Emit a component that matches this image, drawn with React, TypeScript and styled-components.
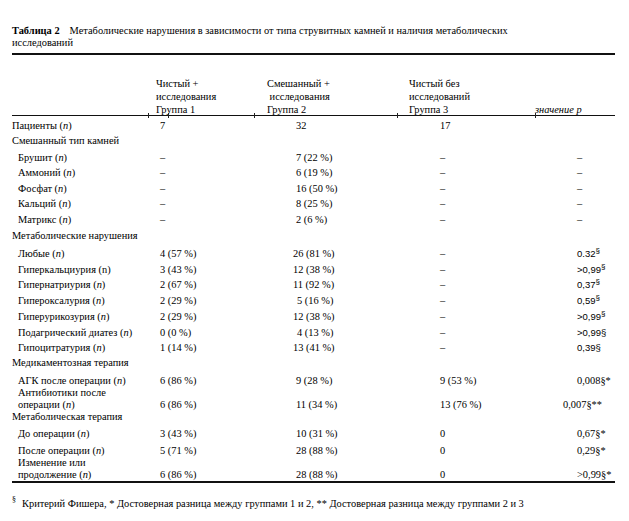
import React from 'react';
import styled, { createGlobalStyle } from 'styled-components';

const Global = createGlobalStyle`
  html, body { margin: 0; padding: 0; background: #fff; }
  body { font-family: "Liberation Serif", "Times New Roman", serif; color: #000; }
`;

const COLS = '136px 106px 143px 138px 80px';

const Page = styled.div`
  width: 629px;
  height: 521px;
  box-sizing: border-box;
  padding: 25px 14px 0 12px;
  font-family: "Liberation Serif", "Times New Roman", serif;
  font-size: 10.4px;
`;

const Title = styled.div`
  line-height: 11.5px;
  white-space: nowrap;
`;

const TitleLabel = styled.b`
  font-weight: bold;
  margin-right: 10px;
`;

const Rule = styled.div<{ $w?: number; $mt?: number }>`
  height: 0;
  border-top: ${(p) => p.$w ?? 1}px solid #111;
  margin-top: ${(p) => p.$mt ?? 0}px;
`;

const HeadRule = styled.div`
  position: relative;
  height: 0;
  border-top: 1px solid #111;
`;

const Tick = styled.span<{ $x: number }>`
  position: absolute;
  left: ${(p) => p.$x}px;
  top: -3px;
  width: 1px;
  height: 5px;
  background: #222;
`;

const Grid = styled.div`
  display: grid;
  grid-template-columns: ${COLS};
  align-items: end;
`;

const HeadRow = styled(Grid)`
  height: 60px;
  line-height: 13px;
`;

const HeadCell = styled.div<{ $pl: number; $italic?: boolean }>`
  padding-left: ${(p) => p.$pl}px;
  margin-bottom: -1px;
  white-space: pre;
  font-style: ${(p) => (p.$italic ? 'italic' : 'normal')};
`;

const Row = styled(Grid)<{ $gap: number }>`
  margin-top: ${(p) => p.$gap}px;
  line-height: 12px;
`;

const Label = styled.div<{ $indent?: boolean }>`
  padding-left: ${(p) => (p.$indent ? 6 : 0)}px;
  white-space: nowrap;
`;

const Value = styled.div<{ $pl: number; $sans?: boolean }>`
  padding-left: ${(p) => p.$pl}px;
  white-space: nowrap;
  height: 12px;
  font-family: ${(p) => (p.$sans ? '"Liberation Sans", Arial, sans-serif' : 'inherit')};
  font-size: ${(p) => (p.$sans ? '9.5px' : 'inherit')};
`;

const Sup = styled.span`
  font-size: 8px;
  line-height: 0;
  position: relative;
  top: -4px;
`;

const Footnote = styled.div`
  margin-top: 15px;
  line-height: 12px;
  white-space: nowrap;
`;

const FootMark = styled.span`
  font-size: 8px;
  line-height: 0;
  position: relative;
  top: -5px;
  margin-right: 6px;
`;

const N = () => <i>n</i>;

type Cell = { t: React.ReactNode; dx?: number; sans?: boolean };
type RowData = { label: React.ReactNode; indent?: boolean; gap: number; cells?: (Cell | string)[] };

const PAD = [12, 42, 43, 42];

const sec = (s: string): React.ReactNode => (
  <>
    {s}
    <Sup>§</Sup>
  </>
);

const rows: RowData[] = [
  { label: <>Пациенты (<N />)</>, gap: 4, cells: ['7', '32', '17', ''] },
  { label: 'Смешанный тип камней', gap: 3 },
  { label: <>Брушит (<N />)</>, indent: true, gap: 5, cells: ['–', '7 (22 %)', '–', '–'] },
  { label: <>Аммоний (<N />)</>, indent: true, gap: 3, cells: ['–', '6 (19 %)', '–', '–'] },
  { label: <>Фосфат (<N />)</>, indent: true, gap: 4, cells: ['–', '16 (50 %)', '–', '–'] },
  { label: <>Кальций (<N />)</>, indent: true, gap: 3, cells: ['–', '8 (25 %)', '–', '–'] },
  { label: <>Матрикс (<N />)</>, indent: true, gap: 4, cells: ['–', '2 (6 %)', '–', '–'] },
  { label: 'Метаболические нарушения', gap: 4 },
  { label: <>Любые (<N />)</>, indent: true, gap: 6, cells: ['4 (57 %)', { t: '26 (81 %)', dx: -3 }, '–', { t: sec('0.32'), sans: true }] },
  { label: 'Гиперкальциурия (n)', indent: true, gap: 4, cells: ['3 (43 %)', { t: '12 (38 %)', dx: -3 }, '–', { t: sec('>0,99'), sans: true }] },
  { label: <>Гипернатриурия (<N />)</>, indent: true, gap: 3, cells: ['2 (67 %)', { t: '11 (92 %)', dx: -3 }, '–', { t: sec('0,37'), sans: true }] },
  { label: <>Гипероксалурия (<N />)</>, indent: true, gap: 4, cells: ['2 (29 %)', { t: '5 (16 %)', dx: 1 }, '–', { t: sec('0,59'), sans: true }] },
  { label: <>Гиперурикозурия (<N />)</>, indent: true, gap: 4, cells: ['2 (29 %)', { t: '12 (38 %)', dx: -3 }, '–', { t: sec('>0,99'), sans: true }] },
  { label: <>Подагрический диатез (<N />)</>, indent: true, gap: 4, cells: ['0 (0 %)', { t: '4 (13 %)', dx: 1 }, '–', { t: '>0,99§', sans: true }] },
  { label: <>Гипоцитратурия (<N />)</>, indent: true, gap: 3, cells: ['1 (14 %)', { t: '13 (41 %)', dx: -3 }, '–', { t: '0,39§', sans: true }] },
  { label: 'Медикаментозная терапия', gap: 3 },
  { label: <>АГК после операции (<N />)</>, indent: true, gap: 6, cells: ['6 (86 %)', '9 (28 %)', '9 (53 %)', '0,008§*'] },
  { label: <>Антибиотики после<br />операции (<N />)</>, indent: true, gap: 0, cells: ['6 (86 %)', '11 (34 %)', '13 (76 %)', { t: '0,007§**', dx: -14 }] },
  { label: 'Метаболическая терапия', gap: 0 },
  { label: <>До операции (<N />)</>, indent: true, gap: 5, cells: ['3 (43 %)', '10 (31 %)', '0', '0,67§*'] },
  { label: <>После операции (<N />)</>, indent: true, gap: 5, cells: ['5 (71 %)', '28 (88 %)', '0', '0,29§*'] },
  { label: <>Изменение или<br />продолжение (<N />)</>, indent: true, gap: 0, cells: ['6 (86 %)', '28 (88 %)', '0', '>0,99§*'] },
];

export default function App() {
  return (
    <Page>
      <Global />
      <Title>
        <TitleLabel>Таблица 2</TitleLabel>
        Метаболические нарушения в зависимости от типа струвитных камней и наличия метаболических
        <br />
        исследований
      </Title>
      <Rule $w={2} $mt={5} />
      <HeadRow>
        <div />
        <HeadCell $pl={8}>{'Чистый +\nисследования\nГруппа 1'}</HeadCell>
        <HeadCell $pl={13}>{'Смешанный +\n исследования\nГруппа 2'}</HeadCell>
        <HeadCell $pl={12}>{'Чистый без\nисследований\nГруппа 3'}</HeadCell>
        <HeadCell $pl={0} $italic>значение р</HeadCell>
      </HeadRow>
      <HeadRule>
        {[136, 156, 242, 385, 523].map((x) => (
          <Tick key={x} $x={x} />
        ))}
      </HeadRule>
      {rows.map((r, i) => (
        <Row key={i} $gap={r.gap}>
          <Label $indent={r.indent}>{r.label}</Label>
          {(r.cells ?? ['', '', '', '']).map((c, j) => {
            const cell: Cell = typeof c === 'string' ? { t: c } : c;
            return (
              <Value key={j} $pl={PAD[j] + (cell.dx ?? 0)} $sans={cell.sans}>
                {cell.t}
              </Value>
            );
          })}
        </Row>
      ))}
      <Rule $w={2} $mt={0} />
      <Footnote>
        <FootMark>§</FootMark>
        Критерий Фишера, * Достоверная разница между группами 1 и 2, ** Достоверная разница между группами 2 и 3
      </Footnote>
    </Page>
  );
}
